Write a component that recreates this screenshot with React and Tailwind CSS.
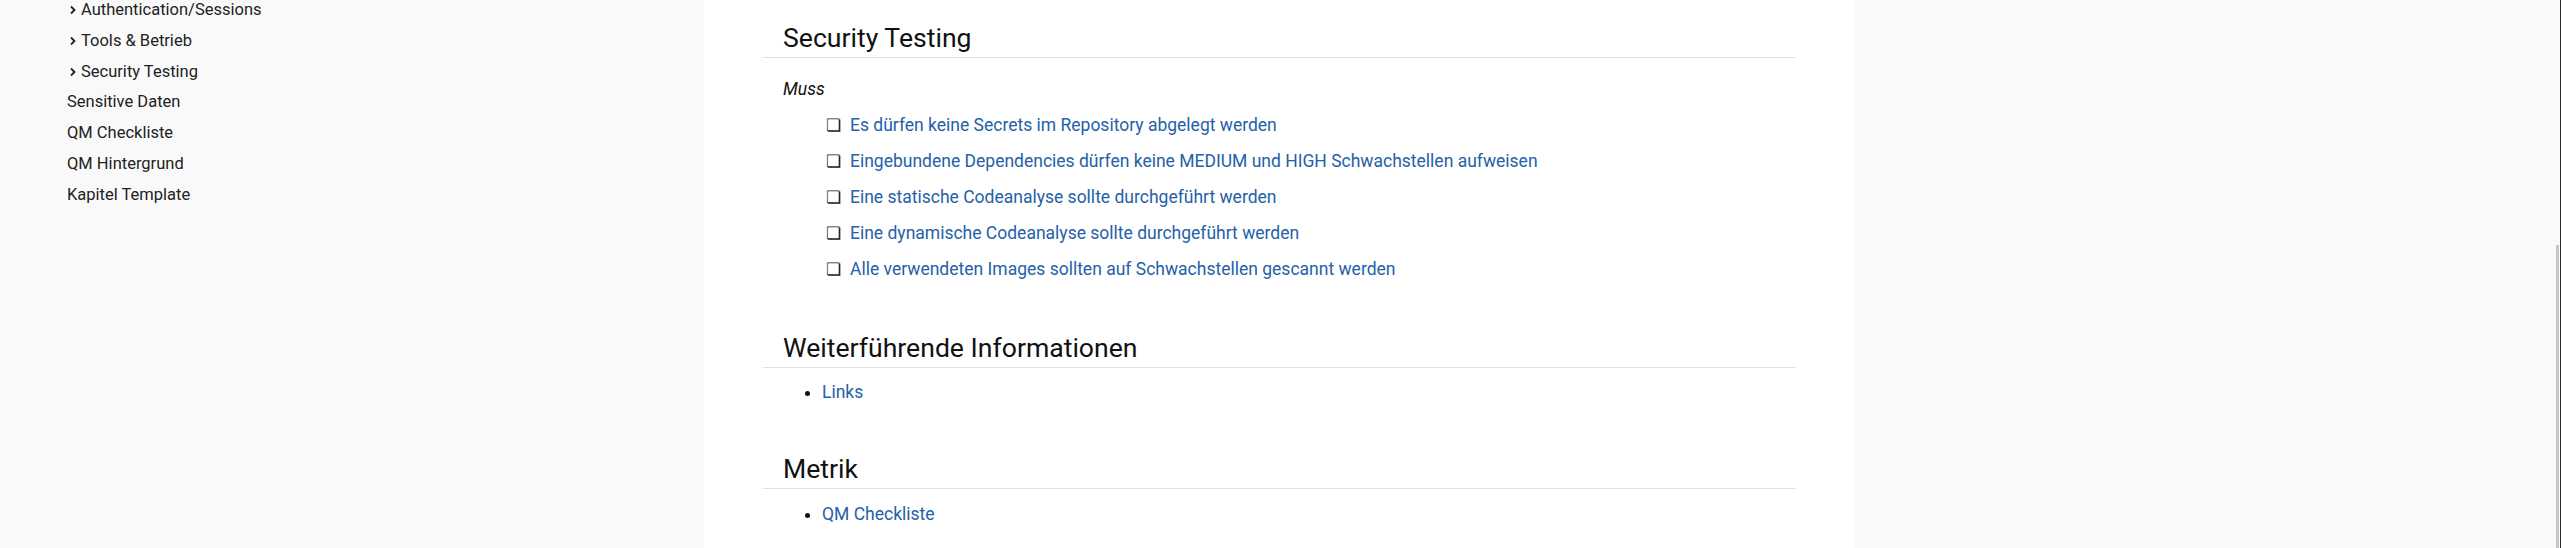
import React from "react";

const nav = [
  { label: "Authentication/Sessions", child: true },
  { label: "Tools & Betrieb", child: true },
  { label: "Security Testing", child: true },
  { label: "Sensitive Daten" },
  { label: "QM Checkliste" },
  { label: "QM Hintergrund" },
  { label: "Kapitel Template" },
];

const checks = [
  "Es dürfen keine Secrets im Repository abgelegt werden",
  "Eingebundene Dependencies dürfen keine MEDIUM und HIGH Schwachstellen aufweisen",
  "Eine statische Codeanalyse sollte durchgeführt werden",
  "Eine dynamische Codeanalyse sollte durchgeführt werden",
  "Alle verwendeten Images sollten auf Schwachstellen gescannt werden",
];

function Chevron() {
  return (
    <svg width="8" height="10" viewBox="0 0 8 10" className="shrink-0">
      <polyline points="2,1.5 5.5,5 2,8.5" fill="none" stroke="#222" strokeWidth="1.8" />
    </svg>
  );
}

function Heading({ children, className }) {
  return (
    <div className={"border-b border-[#e1e1e1] pb-[3px] " + className}>
      <h2 className="pl-[20px] text-[26.6px] leading-[32px] font-normal text-[#111]">{children}</h2>
    </div>
  );
}

export default function App() {
  return (
    <div className="flex h-[548px] overflow-hidden bg-[#f9f9f9] font-['Roboto',sans-serif] text-[16.5px] text-[#222]">
      <nav className="w-[704px] shrink-0 pl-[67px] -mt-[5px]">
        {nav.map((n) => (
          <div key={n.label} className="flex h-[30.8px] items-center">
            {n.child ? (
              <div className="flex items-center gap-[4px] pl-[2px]">
                <Chevron />
                <span>{n.label}</span>
              </div>
            ) : (
              <span>{n.label}</span>
            )}
          </div>
        ))}
      </nav>

      <main className="w-[1151px] shrink-0 bg-white pl-[59px] text-[17.5px]">
        <div className="w-[1033px]">
          <Heading className="mt-[22px]">Security Testing</Heading>
          <p className="mt-[19px] pl-[20px] italic leading-[24px] text-[#111]">Muss</p>
          <ul className="mt-[6px] pl-[63px]">
            {checks.map((c) => (
              <li key={c} className="flex h-[36px] items-center gap-[9px]">
                <span className="text-[17px] leading-none text-[#222]">❏</span>
                <a className="text-[#2461a8]">{c}</a>
              </li>
            ))}
          </ul>
          <Heading className="mt-[45px]">Weiterführende Informationen</Heading>
          <ul className="mt-[12px] list-disc pl-[59px] leading-[24px]">
            <li className="marker:text-[#111]"><a className="text-[#2461a8]">Links</a></li>
          </ul>
          <Heading className="mt-[49px]">Metrik</Heading>
          <ul className="mt-[13px] list-disc pl-[59px] leading-[24px]">
            <li className="marker:text-[#111]"><a className="text-[#2461a8]">QM Checkliste</a></li>
          </ul>
        </div>
      </main>

      <div className="flex flex-1 justify-end">
        <div className="mr-[1px] mt-[245px] w-[3px] bg-[#c6c6c6]" />
        <div className="w-[1px] bg-[#2a2a2a]" />
      </div>
    </div>
  );
}
